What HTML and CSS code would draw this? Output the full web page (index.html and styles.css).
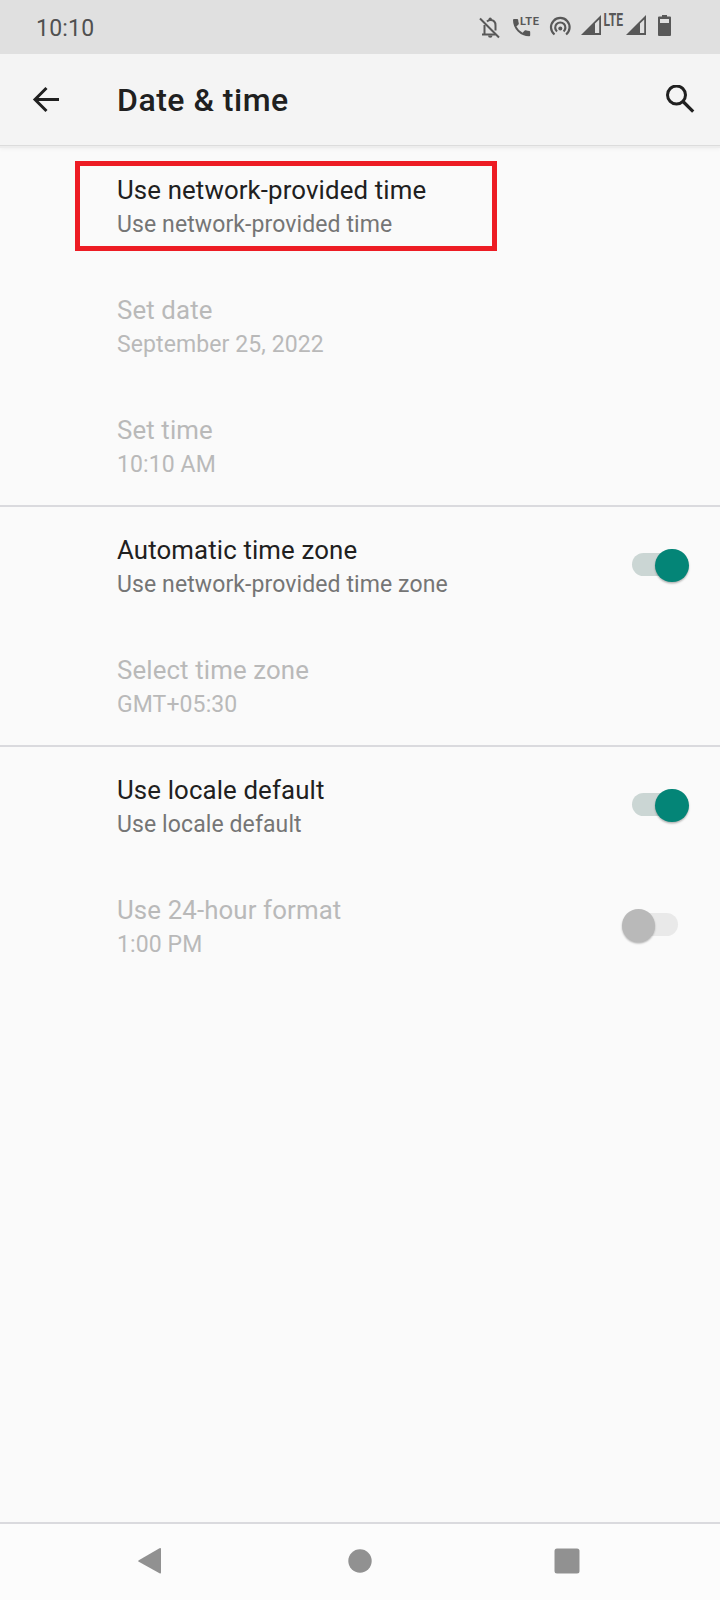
FILE: index.html
```html
<!DOCTYPE html>
<html lang="en">
<head>
<meta charset="utf-8">
<title>Date &amp; time</title>
<link rel="stylesheet" href="styles.css">
</head>
<body>
<div class="screen">
  <header class="status">
    <span class="clock">10:10</span>
    <svg class="status-icons" width="200" height="54" viewBox="476 0 200 54" aria-hidden="true">
      <g fill="none" stroke="#585858" stroke-width="2">
        <path d="M480 18.500l19 19"/>
        <path d="M484.500 25v9.500M482 34.500h13.500M487 21.500c1-1 2-1.500 3.500-1.500 3.500 0 5 2.500 5 5.500v5"/>
      </g>
      <path fill="#585858" d="M488.500 20v-.700a1.700 1.700 0 0 1 3.400 0v.700zM488 35.500h4.500a2.200 2.200 0 0 1-4.500 0z"/>
      <path fill="#585858" d="M514 19h3.200q.9 0 1 .9.100 1.800.6 3.400.200.600-.3 1.100l-2.100 2.100q2 4 6.200 6.200l2.100-2.100q.5-.5 1.100-.3 1.600.5 3.500.6.900.1.900 1v3.300q0 1-1 1A16.200 16.200 0 0 1 513 20q0-1 1-1z"/>
      <text class="call-lte" x="520" y="25" textLength="19" lengthAdjust="spacing">LTE</text>
      <g fill="none" stroke="#585858" stroke-width="2.200">
        <path d="M554.500 34.500a9.300 9.300 0 1 1 11.600 0"/>
        <path d="M557 31.500a5.100 5.100 0 1 1 6.600 0"/>
      </g>
      <circle cx="560.300" cy="28.500" r="2" fill="#585858"/>
      <path fill="#585858" fill-rule="evenodd" d="M581 35l20-20v20zM595 23.500V33h4.200V19.500z"/>
      <text class="signal-lte" x="603.500" y="25.500" textLength="19.500" lengthAdjust="spacingAndGlyphs">LTE</text>
      <path fill="#585858" fill-rule="evenodd" d="M626 35l20-20v20zM640 23.500V33h4.200V19.500z"/>
      <path fill="#585858" fill-rule="evenodd" d="M662 15h5v1.500h3q1 0 1 1V35q0 1-1 1h-11q-1 0-1-1V17.500q0-1 1-1h3zM660 19v4h9v-4z"/>
    </svg>
  </header>
  <div class="appbar">
    <svg class="back" width="28" height="28" viewBox="0 0 28 28" fill="none" stroke="#202020" stroke-width="3"><path d="M14.500 2L3 13.500 14.500 25M2.500 13.500H27"/></svg>
    <h1>Date &amp; time</h1>
    <svg class="search" width="30" height="30" viewBox="0 0 30 30" fill="none" stroke="#202020" stroke-width="3"><circle cx="10.500" cy="10" r="9"/><path stroke-width="3.200" d="M17 16.500l10.200 10.200"/></svg>
  </div>
  <main>
    <section>
      <div class="row marked"><div class="label"><p class="title">Use network-provided time</p><p class="sub">Use network-provided time</p></div></div>
      <div class="row off"><div class="label"><p class="title">Set date</p><p class="sub">September 25, 2022</p></div></div>
      <div class="row off"><div class="label"><p class="title">Set time</p><p class="sub">10:10 AM</p></div></div>
    </section>
    <section>
      <div class="row"><div class="label"><p class="title">Automatic time zone</p><p class="sub">Use network-provided time zone</p></div><span class="switch on"></span></div>
      <div class="row off"><div class="label"><p class="title">Select time zone</p><p class="sub">GMT+05:30</p></div></div>
    </section>
    <section>
      <div class="row"><div class="label"><p class="title">Use locale default</p><p class="sub">Use locale default</p></div><span class="switch on"></span></div>
      <div class="row off"><div class="label"><p class="title">Use 24-hour format</p><p class="sub">1:00 PM</p></div><span class="switch"></span></div>
    </section>
  </main>
  <nav class="navbar">
    <svg width="24" height="28" viewBox="0 0 24 28"><path fill="#919191" d="M21.500 1.200Q23 .500 23 2v23.500q0 1.500-1.500.700L.8 14.800q-1.300-.8 0-1.600z"/></svg>
    <svg class="home" width="24" height="24" viewBox="0 0 24 24"><circle cx="12" cy="12" r="11.700" fill="#919191"/></svg>
    <svg width="26" height="26" viewBox="0 0 26 26"><rect x=".500" y=".500" width="25" height="25" rx="2.500" fill="#919191"/></svg>
  </nav>
</div>
</body>
</html>
```

FILE: styles.css
```css
*, *::after { box-sizing: border-box; }
body { margin: 0; font-family: Roboto, sans-serif; background: #fafafa; }
h1, p { margin: 0; }
.screen { width: 720px; height: 1600px; display: flex; flex-direction: column; overflow: hidden; }
.status { height: 54px; background: #e0e0e0; display: flex; justify-content: space-between; padding: 0 44px 0 36px; }
.clock { font-size: 23px; line-height: 58px; font-weight: 400; color: #505050; letter-spacing: 0.2px; }
.call-lte, .signal-lte { font-family: Roboto, sans-serif; font-weight: 700; fill: #585858; }
.call-lte { font-size: 11px; }
.signal-lte { font-size: 18px; }
.appbar { height: 92px; background: #f4f4f4; border-bottom: 1px solid #dcdcdc; box-shadow: 0 2px 0 #ededed, 0 3px 4px #0000000c; display: flex; align-items: center; padding: 0 24px 0 32px; }
.back { margin-right: 57px; }
.search { margin-left: auto; }
h1 { font-size: 32px; font-weight: 500; line-height: 38px; color: #202020; letter-spacing: 0.5px; padding-top: 1px; }
main { flex: 1; }
section { position: relative; }
section + section::after { content: ""; position: absolute; left: 0; right: 0; top: -1px; height: 2px; background: #dadade; }
.row { height: 120px; padding: 27px 31px 0 117px; display: flex; justify-content: space-between; }
.title { font-size: 25.8px; line-height: 34px; color: #202020; letter-spacing: 0.13px; white-space: nowrap; }
.sub { font-size: 23px; line-height: 34px; padding-top: 1px; color: #757575; letter-spacing: 0.1px; white-space: nowrap; }
.off .title, .off .sub { color: #b9b9b9; }
.marked { position: relative; }
.marked::after { content: ""; position: absolute; left: 75px; top: 15px; width: 422px; height: 90px; border: 5px solid #ed1c24; }
.switch { position: relative; width: 46px; height: 23px; border-radius: 12px; background: #e9e9e9; margin: 20px 11px 0 0; }
.switch::after { content: ""; position: absolute; left: -10.5px; top: -4.5px; width: 33.5px; height: 33.5px; border-radius: 50%; background: #b9b9b9; box-shadow: 0 1.5px 2px #00000048; }
.switch.on { background: #cbd6d4; }
.switch.on::after { left: 23.3px; background: #048577; }
.navbar { height: 78px; border-top: 2px solid #dadade; background: #fcfcfc; display: flex; align-items: center; justify-content: space-between; padding: 0 140px 2px 138px; }
.home { margin-left: 4px; }
```
